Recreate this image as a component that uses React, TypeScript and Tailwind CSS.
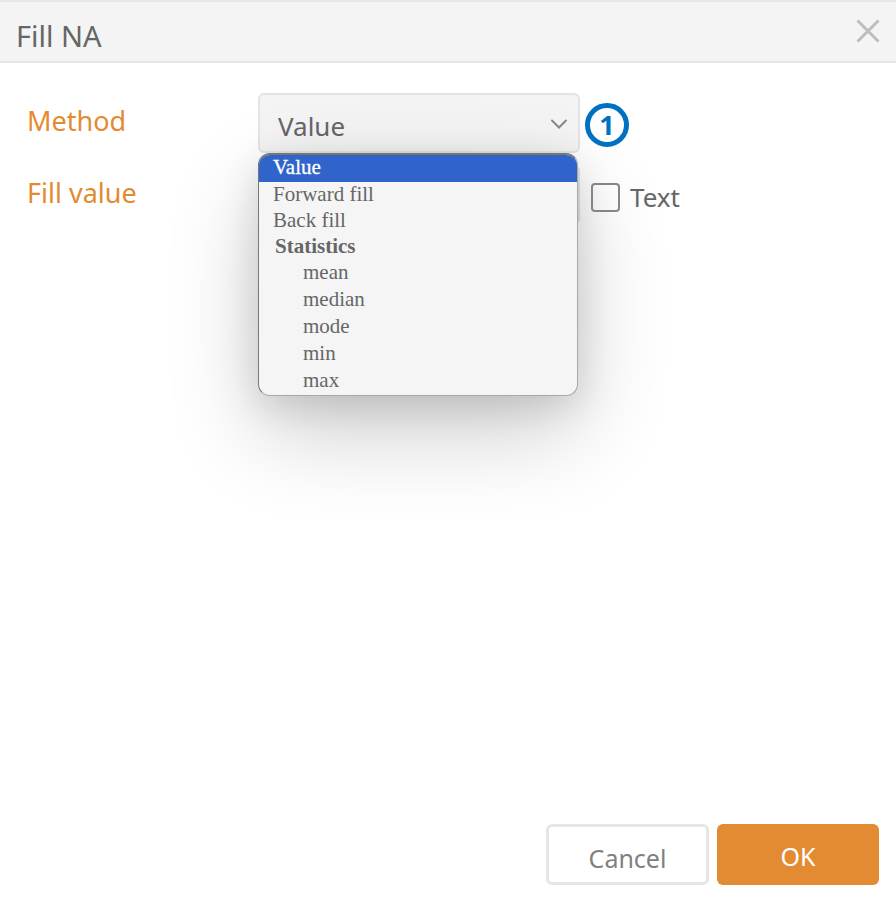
import { useState } from "react";

const plainOptions = ["Value", "Forward fill", "Back fill"];
const statistics = ["mean", "median", "mode", "min", "max"];

function MethodMenu({ value, onPick }: { value: string; onPick: (v: string) => void }) {
  return (
    <ul
      role="listbox"
      aria-label="Method options"
      className="absolute left-0 top-full z-10 w-[320px] overflow-hidden rounded-xl border border-t-2 border-[#a8a8a8] border-l-[#777777] border-t-[#77776f] bg-[#f5f5f5] font-['Liberation_Serif',serif] text-[21px] text-[#666666] shadow-[0_36px_92px_rgba(0,0,0,0.2),0_10px_36px_rgba(0,0,0,0.12)]"
    >
      {plainOptions.map((o) => (
        <li
          key={o}
          role="option"
          aria-selected={o === value}
          onClick={() => onPick(o)}
          className={
            o === value
              ? "h-[27px] bg-[#3064cb] px-3.5 leading-[24px] text-white [-webkit-text-stroke:0.3px_white]"
              : "h-[26px] px-3.5 leading-[24px]"
          }
        >
          {o}
        </li>
      ))}
      <li role="group" aria-labelledby="stats-heading">
        <div id="stats-heading" className="h-[26px] px-4 font-bold leading-[24px]">
          Statistics
        </div>
        <ul>
          {statistics.map((o) => (
            <li
              key={o}
              role="option"
              aria-selected={o === value}
              onClick={() => onPick(o)}
              className="h-[27px] px-11 leading-[24px]"
            >
              {o}
            </li>
          ))}
        </ul>
      </li>
    </ul>
  );
}

export default function App() {
  const [method, setMethod] = useState("Value");
  return (
    <div
      role="dialog"
      aria-labelledby="title"
      className="flex min-h-screen flex-col bg-white font-['Noto_Sans',sans-serif] text-[27px] text-[#666666]"
    >
      <header className="flex h-[63px] items-center justify-between border-y-2 border-[#e6e6e6] bg-[#f4f4f4] px-4">
        <h1 id="title" className="pt-2 text-[29px] leading-[36px]">Fill NA</h1>
        <button aria-label="Close" className="pb-0.5">
          <svg width="24" height="24" viewBox="0 0 24 24" fill="none" stroke="#bdbdbd" strokeWidth="3">
            <path d="M1.5 1.5 22.5 22.5M22.5 1.5 1.5 22.5" />
          </svg>
        </button>
      </header>

      <main className="flex flex-1 flex-col gap-3 pl-[27px] pr-4 pt-[30px]">
        <div className="flex h-[60px] items-center">
          <label htmlFor="method" className="w-[231px] shrink-0 pb-1 text-[#e38b32]">
            Method
          </label>
          <div className="relative w-[322px] shrink-0">
            <select
              id="method"
              value={method}
              onChange={(e) => setMethod(e.target.value)}
              className="block h-[60px] w-full appearance-none rounded-md border-2 border-[#e4e4e4] bg-[#f4f4f4] pl-[18px] pt-1.5 text-[26px]"
            >
              {plainOptions.map((o) => (
                <option key={o}>{o}</option>
              ))}
              <optgroup label="Statistics">
                {statistics.map((o) => (
                  <option key={o}>{o}</option>
                ))}
              </optgroup>
            </select>
            <svg
              className="pointer-events-none absolute right-3 top-[26px]"
              width="18"
              height="11"
              viewBox="0 0 18 11"
              fill="none"
              stroke="#888888"
              strokeWidth="2"
            >
              <path d="M2 1.5 9 8.5 16 1.5" strokeLinecap="round" />
            </svg>
            <MethodMenu value={method} onPick={setMethod} />
          </div>
          <span className="relative z-20 ml-[5px] mt-1 flex size-[44px] items-center justify-center rounded-full border-[5px] border-[#0070c0] bg-white text-[27px] font-bold text-[#0070c0]">
            1
          </span>
        </div>

        <div className="flex h-[60px] items-center">
          <label htmlFor="fill" className="w-[231px] shrink-0 pb-1 text-[#e38b32]">
            Fill value
          </label>
          <input
            id="fill"
            type="text"
            className="h-[60px] w-[322px] shrink-0 rounded-md border-2 border-[#e4e4e4] px-[18px] text-[26px]"
          />
          <label className="relative z-20 ml-[11px] flex items-center gap-2.5 pt-1 text-[26px]">
            <input
              type="checkbox"
              className="size-[29px] appearance-none rounded border-2 border-[#858585] checked:bg-[#e38b32]"
            />
            Text
          </label>
        </div>
      </main>

      <footer className="flex justify-end gap-2 px-[17px] pb-3.5 text-[25px]">
        <button className="h-[61px] w-[163px] rounded-md border-[3px] border-[#e6e6e6] bg-white pt-2 text-[#808080]">
          Cancel
        </button>
        <button className="h-[61px] w-[162px] rounded-md bg-[#e38b32] pt-1 text-white">OK</button>
      </footer>
    </div>
  );
}
